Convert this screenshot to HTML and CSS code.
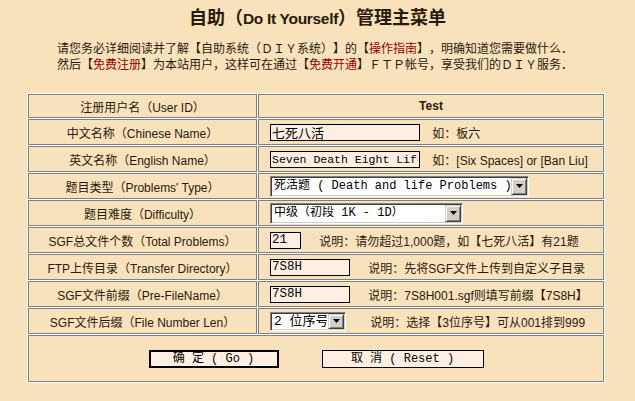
FILE: index.html
```html
<!DOCTYPE html>
<html>

<head>
    <meta charset="utf-8">
    <link rel="stylesheet" href="styles.css">
</head>

<body>
    <h1 class="title">自助（<span class="title-en">Do It Yourself</span>）管理主菜单</h1>
    <div class="intro">
        <p>请您务必详细阅读并了解【自助系统（ＤＩＹ系统）】的【<a href="#">操作指南</a>】，明确知道您需要做什么．</p>
        <p>然后【<a href="#">免费注册</a>】为本站用户，这样可在通过【<a href="#">免费开通</a>】ＦＴＰ帐号，享受我们的ＤＩＹ服务．</p>
    </div>
    <form class="diy-form">
        <table class="menu">
            <tr class="first-row">
                <td class="label">注册用户名（User ID）</td>
                <td class="value user">Test</td>
            </tr>
            <tr>
                <td class="label">中文名称（Chinese Name）</td>
                <td class="value">
                    <input class="field cn-name" type="text" value="七死八活">
                    <span class="note gap-s">如：板六</span>
                </td>
            </tr>
            <tr>
                <td class="label">英文名称（English Name）</td>
                <td class="value">
                    <input class="field en-name" type="text" value="Seven Death Eight Life">
                    <span class="note gap-s">如：[Six Spaces] or [Ban Liu]</span>
                </td>
            </tr>
            <tr>
                <td class="label">题目类型（Problems' Type）</td>
                <td class="value">
                    <span class="pick pick-type">
                        <select>
                            <option>死活题 ( Death and life Problems )</option>
                            <option>手筋题 ( Tesuji Problems )</option>
                        </select>
                    </span>
                </td>
            </tr>
            <tr>
                <td class="label">题目难度（Difficulty）</td>
                <td class="value">
                    <span class="pick pick-level">
                        <select>
                            <option>中级（初段 1K - 1D）</option>
                            <option>初级（10K - 2K）</option>
                        </select>
                    </span>
                </td>
            </tr>
            <tr>
                <td class="label">SGF总文件个数（Total Problems）</td>
                <td class="value">
                    <input class="field num" type="text" value="21">
                    <span class="note gap-m">说明：请勿超过1,000题，如【七死八活】有21题</span>
                </td>
            </tr>
            <tr>
                <td class="label">FTP上传目录（Transfer Directory）</td>
                <td class="value">
                    <input class="field code" type="text" value="7S8H">
                    <span class="note gap-m">说明：先将SGF文件上传到自定义子目录</span>
                </td>
            </tr>
            <tr>
                <td class="label">SGF文件前缀（Pre-FileName）</td>
                <td class="value">
                    <input class="field code" type="text" value="7S8H">
                    <span class="note gap-m">说明：7S8H001.sgf则填写前缀【7S8H】</span>
                </td>
            </tr>
            <tr>
                <td class="label">SGF文件后缀（File Number Len）</td>
                <td class="value">
                    <span class="pick pick-len">
                        <select>
                            <option>2 位序号</option>
                            <option>3 位序号</option>
                        </select>
                    </span>
                    <span class="note gap-l">说明：选择【3位序号】可从001排到999</span>
                </td>
            </tr>
            <tr>
                <td class="actions-cell" colspan="2">
                    <div class="actions">
                        <button type="submit" class="btn btn-go">确 定 ( Go )</button>
                        <button type="reset" class="btn btn-reset">取 消 ( Reset )</button>
                    </div>
                </td>
            </tr>
        </table>
    </form>
</body>

</html>
```

FILE: styles.css
```css
* {
    font-family: "Liberation Sans", "Noto Sans CJK SC", sans-serif;
    text-spacing-trim: space-all;
}

body {
    margin: 0;
    background-color: #f7e2bc;
    color: #2a1a0c;
}

.title {
    margin: 0;
    padding-top: 8px;
    line-height: 20px;
    font-size: 18px;
    font-weight: bold;
    text-align: center;
}

.title-en {
    font-size: 15.5px;
    letter-spacing: -0.3px;
}

.intro {
    margin-top: 12px;
    padding-left: 57px;
    font-size: 12px;
    line-height: 16px;
}

.intro p {
    margin: 0;
}

.intro a {
    color: #990000;
    text-decoration: none;
}

.menu {
    margin: 20px 0 0 27px;
    width: 578px;
    border-spacing: 1px;
    background-color: #fff;
}

.menu td {
    border: 1px solid #808080;
    background-color: #f7e2bc;
    padding: 0;
    height: 24px;
    font-size: 12px;
    white-space: nowrap;
}

.menu .first-row td {
    height: 22px;
}

.label {
    width: 227px;
    text-align: center;
}

.value {
    padding-left: 11px !important;
}

.user {
    padding-left: 0 !important;
    text-align: center;
    font-weight: bold;
}

.field {
    box-sizing: border-box;
    height: 17px;
    margin: 0;
    padding: 0 1px;
    border: 1px solid #000;
    background-color: #ffefe2;
    color: #000;
    font-size: 13px;
    vertical-align: middle;
    outline: none;
}

.cn-name {
    width: 150px;
}

.en-name {
    width: 150px;
    font-family: "Liberation Mono", monospace;
    font-size: 11.5px;
}

.num {
    width: 31px;
    font-family: "Liberation Mono", monospace;
    font-size: 12.5px;
}

.code {
    width: 80px;
    font-family: "Liberation Mono", monospace;
    font-size: 12.5px;
}

.note {
    vertical-align: middle;
}

.gap-s {
    margin-left: 9px;
}

.gap-m {
    margin-left: 15px;
}

.gap-l {
    margin-left: 21px;
}

/* windows classic combo box */
.pick {
    position: relative;
    display: inline-block;
    box-sizing: border-box;
    height: 21px;
    vertical-align: middle;
    border: 1px solid;
    border-color: #808080 #fff #fff #808080;
    box-shadow: inset 1px 1px #404040, inset -1px -1px #d4d0c8;
    background-color: #fff;
}

.pick select {
    appearance: none;
    -webkit-appearance: none;
    box-sizing: border-box;
    width: 100%;
    height: 100%;
    margin: 0;
    padding: 0 18px 0 3px;
    border: 0;
    background: transparent;
    color: #000;
    font-family: "Liberation Mono", "Noto Sans CJK SC", monospace;
    font-size: 12px;
    outline: none;
}

.pick::after {
    content: "";
    position: absolute;
    top: 1px;
    right: 1px;
    bottom: 1px;
    width: 16px;
    box-sizing: border-box;
    border: 1px solid;
    border-color: #d4d0c8 #404040 #404040 #d4d0c8;
    box-shadow: inset 1px 1px #fff, inset -1px -1px #808080;
    background-color: #d4d0c8;
    pointer-events: none;
}

.pick::before {
    content: "";
    position: absolute;
    z-index: 1;
    top: 50%;
    right: 5px;
    width: 7px;
    height: 4px;
    margin-top: -2px;
    background-color: #000;
    clip-path: polygon(0 0, 100% 0, 50% 100%);
    pointer-events: none;
}

.pick-type {
    width: 259px;
}

.pick-level {
    width: 193px;
}

.pick-len {
    width: 76px;
    height: 19px;
}

.pick-len select {
    font-size: 13px;
}

.actions-cell {
    height: 45px !important;
}

.actions {
    display: flex;
    justify-content: center;
    align-items: center;
    gap: 43px;
}

.btn {
    box-sizing: border-box;
    height: 18px;
    margin: 0;
    padding: 0;
    border: 1px solid #000;
    background-color: #ffefe2;
    color: #000;
    font-family: "Liberation Mono", "Noto Sans CJK SC", monospace;
    font-size: 12px;
    line-height: 14px;
}

.btn-go {
    width: 130px;
    border-width: 2px;
}

.btn-reset {
    width: 162px;
}
```
